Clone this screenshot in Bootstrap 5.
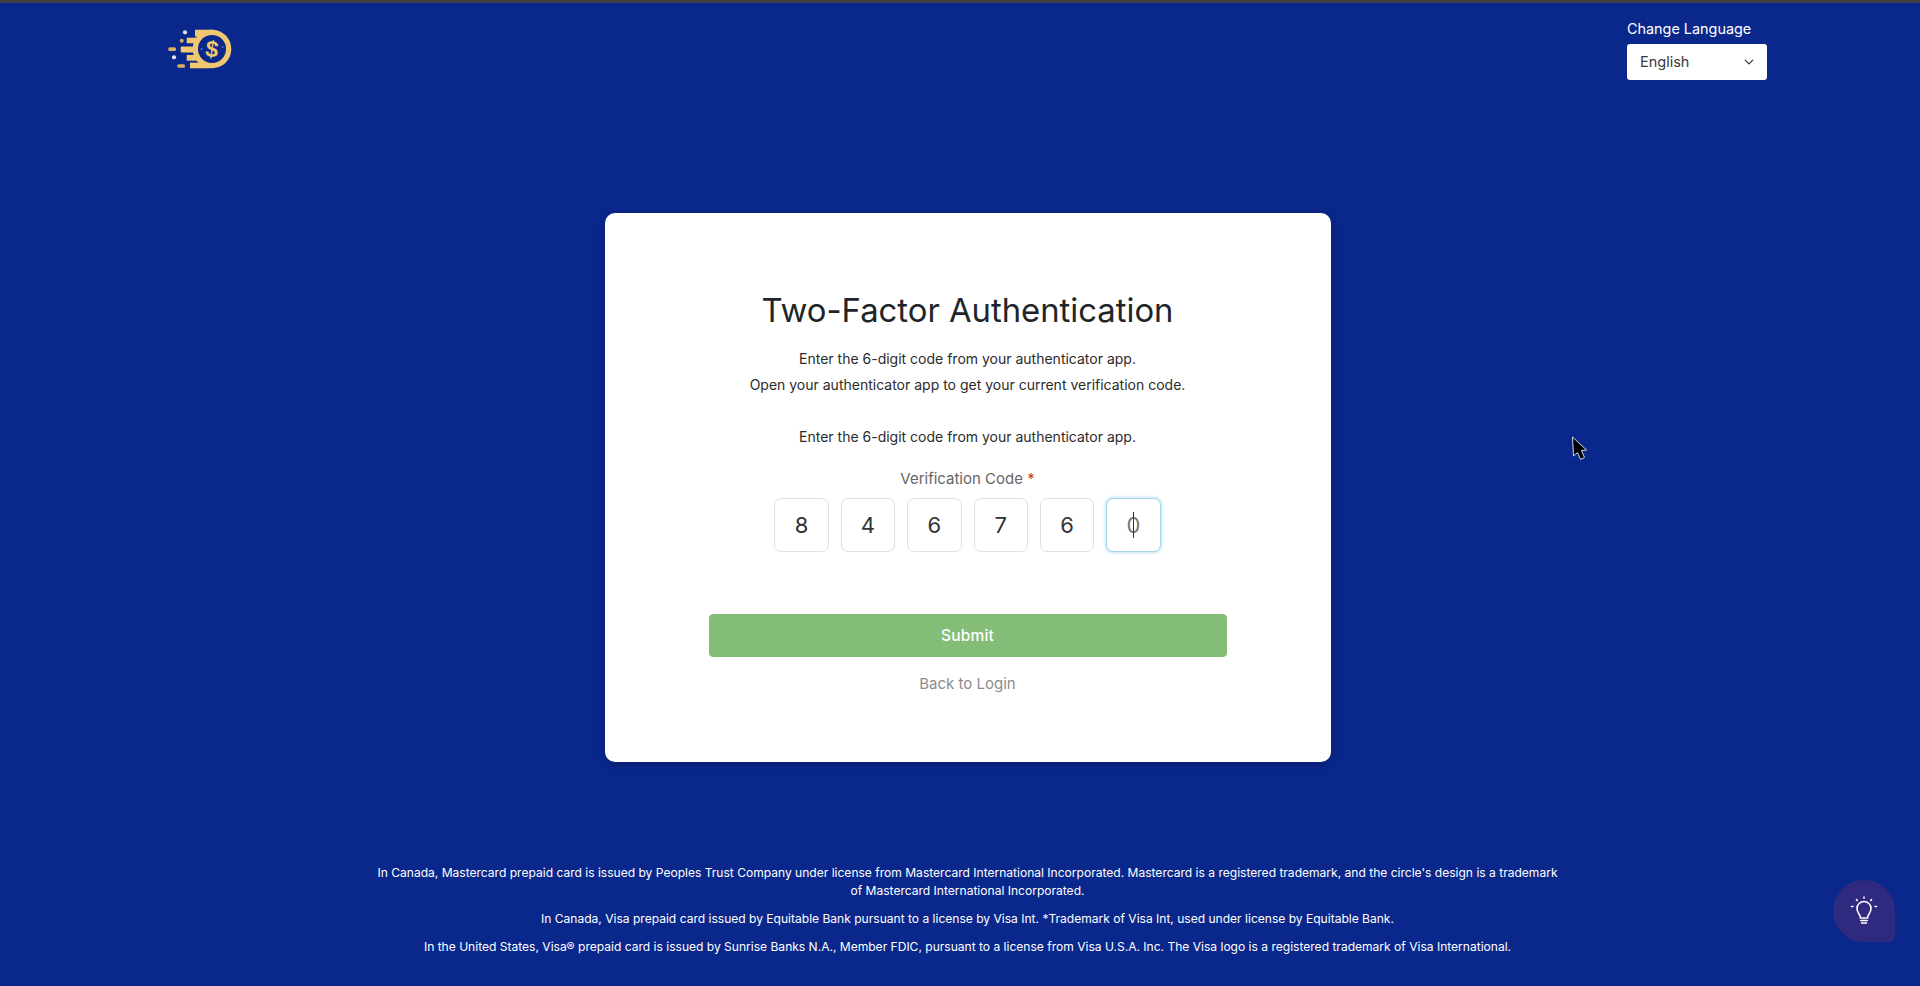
<!DOCTYPE html>
<html lang="en">

<head>
    <meta charset="UTF-8">
    <meta name="viewport" content="width=device-width, initial-scale=1">
    <title>Two-Factor Authentication</title>
    <link href="https://cdn.jsdelivr.net/npm/bootstrap@5.3.0/dist/css/bootstrap.min.css" rel="stylesheet">
    <style>
        html, body { height: 100%; overflow: hidden; }
        body {
            background: #0a278b;
            font-family: "Inter", "Lato", sans-serif;
            border-top: 3px solid #3f4046;
            color: #212529;
        }
        .page-wrap { padding: 0 153px 0 168px; height: 983px; overflow: hidden; }
        .top-bar { height: 210px; }
        .brand-logo { width: 66px; height: 42px; margin-top: 25px; }
        .lang-box { width: 140px; padding-top: 16px; }
        .lang-label { font-size: 14.4px; line-height: 20px; margin-bottom: 5px; color: #fff; }
        .lang-select {
            height: 36px; font-size: 14.5px; padding: 0 24px 0 13px; border-radius: 3px; border: 0;
            color: #3a3a3a; background-size: 10px; background-position: right 13px center;
        }
        .auth-card {
            width: 726px; height: 549px; margin: 0 auto; border-radius: 10px; border: 0;
            box-shadow: 0 2px 8px rgba(0, 0, 0, .25);
            padding: 75px 104px 0;
        }
        .auth-title { font-size: 32.8px; line-height: 44px; font-weight: 400; margin-bottom: 13.5px; color: #212529; }
        .auth-text { font-size: 14px; line-height: 26px; margin: 0; color: #2b2b2b; }
        .auth-gap { margin-top: 26px; }
        .code-label { font-size: 15px; line-height: 22px; color: #666; margin: 18px 0 8.5px; }
        .code-star { color: #c0392b; }
        .code-row { gap: 12px; }
        .code-box {
            width: 54.4px; height: 54px; padding: 0; border: 1px solid #e0e0e0; border-radius: 7px;
            font-size: 22px; text-align: center; color: #333; box-shadow: none;
        }
        .code-box:focus { border-color: #e0e0e0; box-shadow: none; }
        .code-box.is-active { border-color: #a5d6ec; box-shadow: 0 0 3px 1px #bfe3f2; color: #777; }
        .code-caret { top: 14px; left: 27px; width: 1px; height: 26px; background: #333; }
        .submit-btn {
            height: 43px; margin-top: 62px; background: #83bd77; border-color: #83bd77; color: #fff;
            font-size: 15.5px; font-weight: 500; border-radius: 4px; letter-spacing: .2px;
        }
        .back-link { font-size: 15px; line-height: 22px; color: #8c8c8c; text-decoration: none; margin-top: 16px; }
        .legal-area { width: 1195px; margin: 102px auto 0; color: #fff; font-size: 12.05px; line-height: 18px; }
        .legal-area p { margin: 0 0 10px; }
        .help-btn {
            right: 25px; bottom: 44px; width: 62px; height: 62px; padding: 0; border: 0;
            background: #2f2a80; border-radius: 50% 50% 6px 50%;
        }
        .mouse-pointer { left: 1571px; top: 435px; width: 18px; height: 26px; }
    </style>
</head>

<body>
    <div class="page-wrap d-flex flex-column">
        <div class="top-bar d-flex justify-content-between align-items-start">
            <svg class="brand-logo" viewBox="0 0 66 42" aria-label="logo">
                <g fill="#efc871">
                    <circle cx="44" cy="21" r="19.3"/>
                    <rect x="27" y="1.7" width="18" height="7"/>
                    <rect x="18.7" y="9.7" width="14" height="5.6"/>
                    <rect x="12.7" y="18.5" width="16" height="6" rx="1"/>
                    <rect x="18.7" y="27" width="14" height="5.7"/>
                    <rect x="22" y="34.6" width="20" height="5.7"/>
                    <rect x="0.3" y="19.3" width="7.7" height="3.8" rx="1.5" fill="#d9ae62"/>
                    <rect x="9.3" y="36.3" width="7.7" height="3.4" rx="1.5" fill="#d9ae62"/>
                    <circle cx="13.7" cy="12.7" r="2" fill="#d9ae62"/>
                </g>
                <circle cx="17" cy="4.3" r="2.1" fill="#dfe3ee"/>
                <circle cx="6" cy="29.3" r="2.1" fill="#dfe3ee"/>
                <circle cx="44" cy="21" r="14" fill="#0a278b"/>
                <circle cx="33.5" cy="21" r=".9" fill="#5f78c4"/>
                <circle cx="54.5" cy="19" r=".9" fill="#5f78c4"/>
                <text x="44" y="29" text-anchor="middle" font-family="Liberation Sans, sans-serif" font-size="23" font-weight="700" fill="#efc871" transform="rotate(8 44 21)">$</text>
            </svg>
            <div class="lang-box">
                <div class="lang-label">Change Language</div>
                <select class="form-select lang-select" aria-label="Change Language">
                    <option selected>English</option>
                </select>
            </div>
        </div>

        <div class="card auth-card text-center">
            <h1 class="auth-title">Two-Factor Authentication</h1>
            <p class="auth-text">Enter the 6-digit code from your authenticator app.</p>
            <p class="auth-text">Open your authenticator app to get your current verification code.</p>
            <p class="auth-text auth-gap">Enter the 6-digit code from your authenticator app.</p>
            <div class="code-label">Verification Code <span class="code-star">*</span></div>
            <div class="d-flex justify-content-center code-row">
                <input class="form-control code-box" value="8" aria-label="Digit 1">
                <input class="form-control code-box" value="4" aria-label="Digit 2">
                <input class="form-control code-box" value="6" aria-label="Digit 3">
                <input class="form-control code-box" value="7" aria-label="Digit 4">
                <input class="form-control code-box" value="6" aria-label="Digit 5">
                <div class="position-relative">
                    <input class="form-control code-box is-active" value="0" aria-label="Digit 6">
                    <span class="code-caret position-absolute"></span>
                </div>
            </div>
            <button type="button" class="btn w-100 submit-btn">Submit</button>
            <a href="#" class="back-link d-block">Back to Login</a>
        </div>

        <div class="legal-area text-center">
            <p>In Canada, Mastercard prepaid card is issued by Peoples Trust Company under license from Mastercard International Incorporated. Mastercard is a registered trademark, and the circle's design is a trademark of Mastercard International Incorporated.</p>
            <p>In Canada, Visa prepaid card issued by Equitable Bank pursuant to a license by Visa Int. *Trademark of Visa Int, used under license by Equitable Bank.</p>
            <p>In the United States, Visa® prepaid card is issued by Sunrise Banks N.A., Member FDIC, pursuant to a license from Visa U.S.A. Inc. The Visa logo is a registered trademark of Visa International.</p>
        </div>
    </div>

    <button type="button" class="help-btn position-fixed d-flex align-items-center justify-content-center" aria-label="Tips">
        <svg width="28" height="30" viewBox="0 0 28 30" fill="none" stroke="#fff" stroke-linecap="round">
            <path stroke-width="1.6" d="M10.5 22 C10.5 18.5 7 17 7 12.5 A7 7 0 0 1 21 12.5 C21 17 17.5 18.5 17.5 22 Z"/>
            <path stroke-width="1.6" d="M10.8 24.5 H17.2 M11.5 27 H16.5"/>
            <path stroke-width="1.5" d="M14 1 V2.2 M6.5 3.5 L7.2 4.6 M21.5 3.5 L20.8 4.6 M1.5 10.5 H3 M25 10.5 H26.5"/>
        </svg>
    </button>

    <svg class="mouse-pointer position-fixed" viewBox="0 0 18 26">
        <path d="M1.5 2 L2.5 21 L6.5 17.5 L9.5 24.5 L13.5 22.5 L10.5 15.5 L15.5 15 Z" fill="#000" stroke="#e8ecf6" stroke-width=".9" stroke-linejoin="round"/>
    </svg>

    <script src="https://cdn.jsdelivr.net/npm/bootstrap@5.3.0/dist/js/bootstrap.bundle.min.js"></script>
</body>

</html>
